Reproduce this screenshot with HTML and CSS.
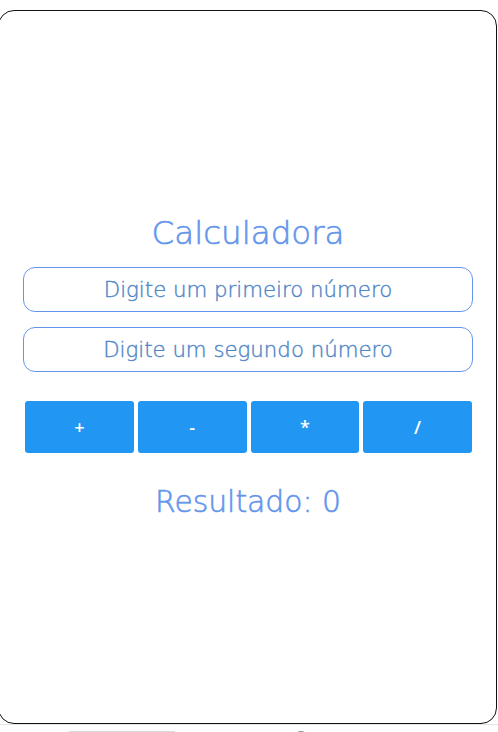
FILE: index.html
```html
<!DOCTYPE html>
<html lang="pt">
<head>
<meta charset="utf-8">
<title>Calculadora</title>
<link rel="stylesheet" href="styles.css">
</head>
<body>
<div class="card">
  <div class="content">
    <h1 class="title">Calculadora</h1>
    <input class="field" type="text" placeholder="Digite um primeiro número">
    <input class="field field-second" type="text" placeholder="Digite um segundo número">
    <div class="ops">
      <button class="op">+</button>
      <button class="op">-</button>
      <button class="op">*</button>
      <button class="op">/</button>
    </div>
    <p class="result">Resultado: 0</p>
  </div>
</div>
<div class="below">
  <span class="below-bar"></span>
  <span class="below-dot"></span>
</div>
</body>
</html>
```

FILE: styles.css
```css
html, body {
  margin: 0;
  padding: 0;
  background: #ffffff;
  overflow: hidden;
}

body {
  width: 498px;
  height: 732px;
}

.card {
  box-sizing: border-box;
  width: 499px;
  height: 714px;
  margin: 10px 0 0 -2px;
  border: 1px solid #111;
  border-radius: 16px;
  background: #fff;
  padding: 204px 24px 0 24px;
}

.content {
  display: flex;
  flex-direction: column;
  align-items: stretch;
  width: 450px;
}

.title {
  margin: 0 0 16px 0;
  font-family: "DejaVu Sans", sans-serif;
  font-weight: 200;
  font-size: 32.5px;
  line-height: 36px;
  color: #6495ed;
  -webkit-text-stroke: 0.6px #6495ed;
  text-align: center;
}

.field {
  box-sizing: border-box;
  width: 450px;
  height: 45px;
  margin: 0;
  border: 1px solid #6495ed;
  border-radius: 12px;
  background: #fff;
  font-family: "DejaVu Sans", sans-serif;
  font-weight: 200;
  font-size: 21.3px;
  color: #4f86c6;
  -webkit-text-stroke: 0.4px #4f86c6;
  text-align: center;
  outline: none;
  padding: 0 6px;
}

.field::placeholder {
  color: #4f86c6;
  opacity: 1;
}

.field-second {
  margin-top: 15px;
}

.ops {
  display: flex;
  gap: 4px;
  margin: 29px 0 0 2px;
  width: 447px;
}

.op {
  flex: 1;
  height: 52px;
  border: none;
  border-radius: 3px;
  background: #2196f3;
  color: #fff;
  font-family: "Open Sans", "Liberation Sans", sans-serif;
  font-weight: 600;
  font-size: 18px;
  padding: 0;
}

.result {
  margin: 31px 0 0 0;
  font-family: "DejaVu Sans", sans-serif;
  font-weight: 200;
  font-size: 29.8px;
  line-height: 36px;
  color: #6495ed;
  -webkit-text-stroke: 0.6px #6495ed;
  text-align: center;
}

.below {
  position: relative;
  height: 8px;
  border-top: 1px solid #e4e4e4;
}

.below-bar {
  position: absolute;
  left: 69px;
  top: 6px;
  width: 106px;
  height: 2px;
  background: #d8d8d8;
}

.below-dot {
  position: absolute;
  left: 294px;
  top: 6px;
  width: 14px;
  height: 14px;
  border-radius: 50%;
  background: #8a8a9a;
}
```
